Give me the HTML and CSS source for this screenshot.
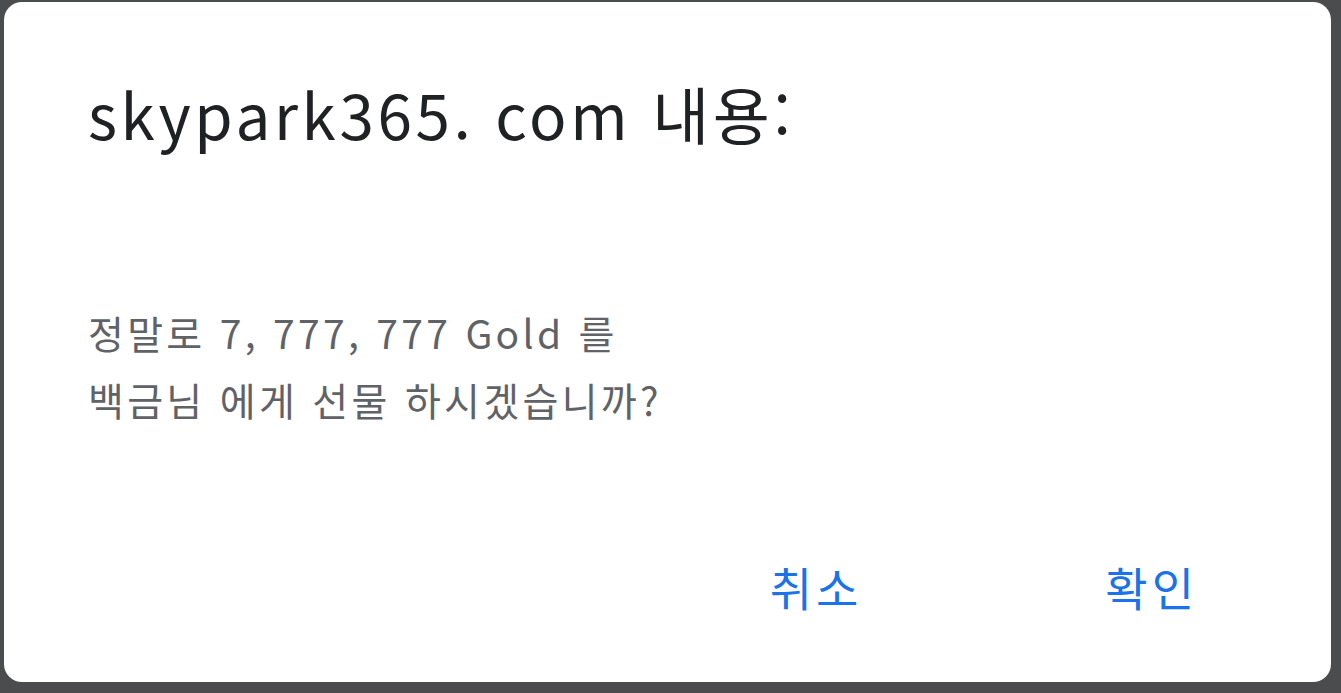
FILE: index.html
```html
<!DOCTYPE html>
<html lang="ko">
<head>
    <meta charset="UTF-8">
    <meta name="viewport" content="width=device-width, initial-scale=1.0">
    <title>skypark365.com</title>
    <link rel="stylesheet" href="styles.css">
</head>
<body>
    <div class="dialog">
        <h1 class="dialog-title">skypark365. com 내용:</h1>
        <p class="dialog-message">정말로 7, 777, 777 Gold 를<br>백금님 에게 선물 하시겠습니까?</p>
        <div class="dialog-actions">
            <button class="dialog-button">취소</button>
            <button class="dialog-button">확인</button>
        </div>
    </div>
</body>
</html>
```

FILE: styles.css
```css
html, body {
    height: 100%;
}
body {
    margin: 0;
    background-color: #4b4c4e;
    font-family: "Noto Sans CJK KR", "Noto Sans", sans-serif;
    padding: 2px 10px 11px 4px;
    box-sizing: border-box;
}
.dialog {
    height: 100%;
    background: #fff;
    border-radius: 18px;
    display: flex;
    flex-direction: column;
    padding: 0 0 0 84px;
    box-sizing: border-box;
}
.dialog-title {
    margin: 71px 0 0;
    font-size: 62px;
    font-weight: normal;
    line-height: 80px;
    letter-spacing: 3.6px;
    color: #202124;
}
.dialog-message {
    margin: 146px 0 0;
    font-size: 39px;
    line-height: 67px;
    letter-spacing: 3.3px;
    color: #5f6368;
}
.dialog-actions {
    margin-top: auto;
    margin-bottom: 66px;
    display: flex;
    justify-content: flex-end;
    gap: 243px;
    padding-right: 133px;
}
.dialog-button {
    background: none;
    border: none;
    padding: 0;
    font-family: inherit;
    font-size: 46px;
    line-height: 60px;
    letter-spacing: 4px;
    color: #1a73e8;
    cursor: pointer;
}
```
